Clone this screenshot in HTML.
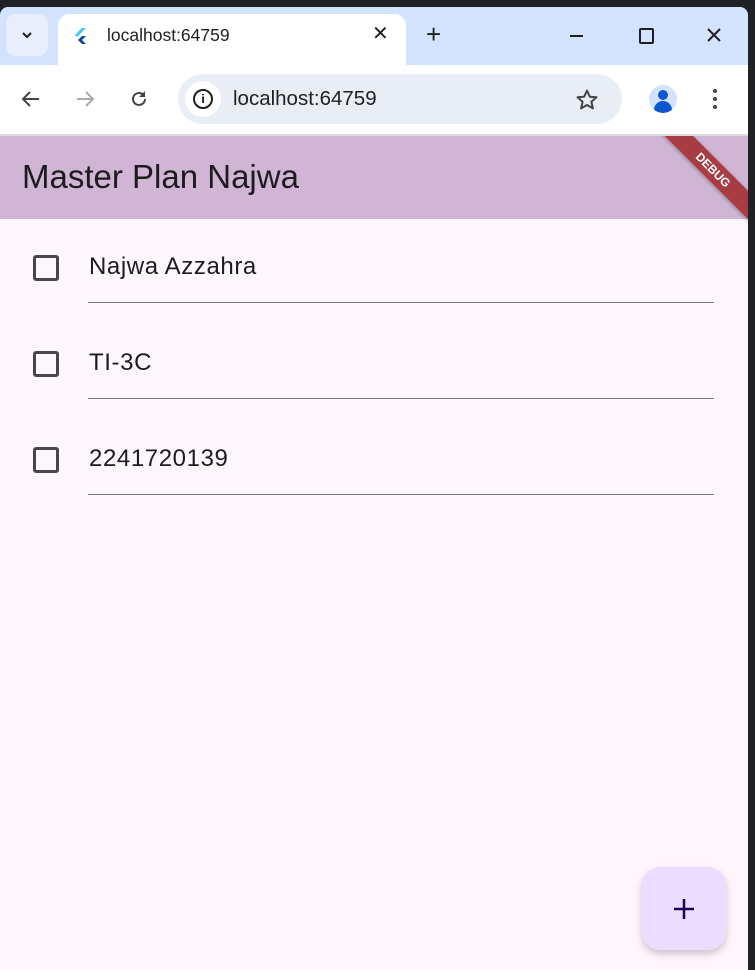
<!DOCTYPE html><html><head><style>
body{margin:0;width:755px;height:970px;background:#202124;position:relative;overflow:hidden;font-family:"Liberation Sans",sans-serif}
.win{position:absolute;left:0;top:7px;width:748px;height:963px;background:#d3e3fd;border-radius:8px 8px 0 0;overflow:hidden}
.abs{position:absolute}
.cb{position:absolute;left:33px;width:26px;height:26px;border:3px solid #49454f;border-radius:3px;box-sizing:border-box}
.tx{position:absolute;left:89px;font-size:24px;color:#1d1b20;letter-spacing:.6px}
.ln{position:absolute;left:88px;width:626px;height:1px;background:#79747e}
</style></head><body>
<div class="win">
 <div class="abs" style="left:6px;top:7px;width:42px;height:42px;border-radius:10px;background:#e8eefb"></div>
 <svg class="abs" style="left:20px;top:23px" width="14" height="10"><path d="M3 3l4 4 4-4" stroke="#1f1f1f" stroke-width="2" fill="none"/></svg>
 <div class="abs" style="left:58px;top:7px;width:348px;height:60px;background:#fff;border-radius:12px 12px 0 0"></div>
 <svg class="abs" style="left:74px;top:20px" width="14" height="18"><path d="M8 1L1 8l2 2 9-9z" fill="#40c4ff"/><path d="M8 9l-4 4 4 4h4l-4-4 4-4z" fill="#0d47a1"/></svg>
 <div class="abs" style="left:107px;top:18px;font-size:17.5px;color:#1f1f1f">localhost:64759</div>
 <div class="abs" style="left:372px;top:14px;font-size:20px;color:#1f1f1f">✕</div>
 <div class="abs" style="left:426px;top:12px;font-size:26px;color:#1f1f1f;font-weight:300">+</div>
 <div class="abs" style="left:570px;top:28px;width:13px;height:2px;background:#1f1f1f"></div>
 <div class="abs" style="left:639px;top:21px;width:11px;height:12px;border:2px solid #1f1f1f;border-radius:2px"></div>
 <svg class="abs" style="left:706px;top:20px" width="16" height="16"><path d="M2 2l12 12M14 2L2 14" stroke="#1f1f1f" stroke-width="2"/></svg>
 <div class="abs" style="left:0;top:58px;width:748px;height:70px;background:#fff"></div>
 <svg class="abs" style="left:20px;top:82px" width="22" height="20"><path d="M19 10H3M10 3l-7 7 7 7" stroke="#444" stroke-width="2" fill="none"/></svg>
 <svg class="abs" style="left:74px;top:82px" width="22" height="20"><path d="M3 10h16M12 3l7 7-7 7" stroke="#aaa" stroke-width="2" fill="none"/></svg>
 <svg class="abs" style="left:128px;top:81px" width="22" height="22"><path d="M17 11a6 6 0 1 1-2-4.5" stroke="#444" stroke-width="2" fill="none"/><path d="M17 3v6h-6z" fill="#444"/></svg>
 <div class="abs" style="left:178px;top:67px;width:444px;height:50px;border-radius:25px;background:#e9eef6"></div>
 <div class="abs" style="left:185px;top:74px;width:36px;height:36px;border-radius:50%;background:#fff"></div>
 <div class="abs" style="left:193px;top:82px;width:16px;height:16px;border:2px solid #1f1f1f;border-radius:50%;font-size:12px;font-weight:bold;text-align:center;line-height:16px">i</div>
 <div class="abs" style="left:233px;top:80px;font-size:20.5px;color:#1f1f1f">localhost:64759</div>
 <svg class="abs" style="left:575px;top:81px" width="24" height="24"><path d="M12 2.5l2.8 6.2 6.7.6-5.1 4.5 1.5 6.6L12 17l-5.9 3.4 1.5-6.6-5.1-4.5 6.7-.6z" stroke="#444" stroke-width="2" fill="none" stroke-linejoin="round"/></svg>
 <div class="abs" style="left:649px;top:78px;width:28px;height:28px;border-radius:50%;background:#d3e3fd;overflow:hidden"><div class="abs" style="left:9px;top:5px;width:10px;height:10px;border-radius:50%;background:#0b57d0"></div><div class="abs" style="left:5px;top:16px;width:18px;height:12px;border-radius:9px 9px 0 0;background:#0b57d0"></div></div>
 <div class="abs" style="left:713px;top:82px;width:4px;height:4px;border-radius:50%;background:#444;box-shadow:0 8px 0 #444,0 16px 0 #444"></div>
 <div class="abs" style="left:0;top:127px;width:748px;height:2px;background:#dadce0"></div>
 <div class="abs" style="left:0;top:129px;width:748px;height:834px;background:#fdf6fd;overflow:hidden">
  <div class="abs" style="left:0;top:0;width:748px;height:83px;background:#d0b5d5"></div>
  <div class="abs" style="left:22px;top:22px;font-size:33px;color:#1d1b20">Master Plan Najwa</div>
  <div class="abs" style="left:613px;top:24px;width:200px;height:20px;background:#a83c43;transform:rotate(45deg);color:#fff;font-size:12px;font-weight:bold;text-align:center;line-height:20px;box-shadow:0 1px 4px rgba(0,0,0,.3)">DEBUG</div>
 </div>
 <div class="cb" style="top:248px"></div><div class="tx" style="top:246px">Najwa Azzahra</div><div class="ln" style="top:295px"></div>
 <div class="cb" style="top:344px"></div><div class="tx" style="top:342px">TI-3C</div><div class="ln" style="top:391px"></div>
 <div class="cb" style="top:440px"></div><div class="tx" style="top:438px">2241720139</div><div class="ln" style="top:487px"></div>
 <div class="abs" style="left:642px;top:860px;width:84px;height:83px;border-radius:18px;background:#eaddff;box-shadow:0 4px 8px rgba(0,0,0,.2)"></div>
 <svg class="abs" style="left:672px;top:890px" width="24" height="24"><path d="M12 2v20M2 12h20" stroke="#21005d" stroke-width="2.5"/></svg>
</div>
</body></html>
